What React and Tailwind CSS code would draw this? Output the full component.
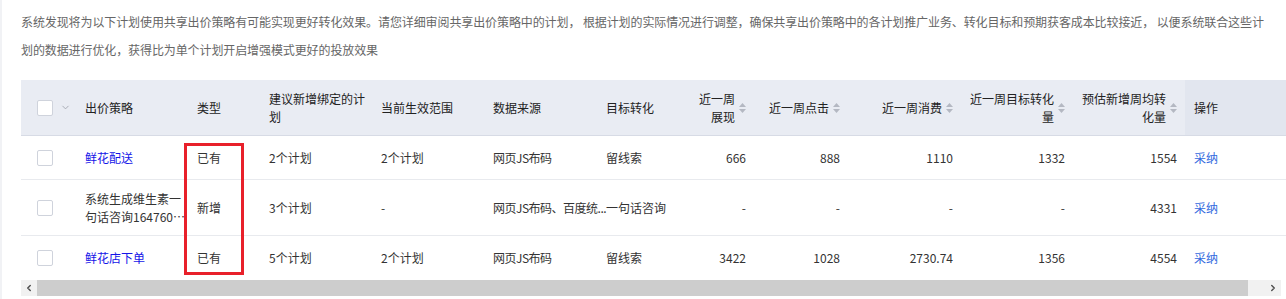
import React from "react";
import { ChevronDown, ChevronLeft, ChevronRight } from "lucide-react";

const rows = [
  {
    id: 1,
    name: "鲜花配送",
    isLink: true,
    type: "已有",
    suggest: "2个计划",
    current: "2个计划",
    source: "网页JS布码",
    target: "留线索",
    show: "666",
    click: "888",
    cost: "1110",
    conv: "1332",
    est: "1554",
    h: "h-11",
  },
  {
    id: 2,
    name: "系统生成维生素一句话咨询1647601234567",
    isLink: false,
    type: "新增",
    suggest: "3个计划",
    current: "-",
    source: "网页JS布码、百度统...",
    target: "一句话咨询",
    show: "-",
    click: "-",
    cost: "-",
    conv: "-",
    est: "4331",
    h: "h-14",
  },
  {
    id: 3,
    name: "鲜花店下单",
    isLink: true,
    type: "已有",
    suggest: "5个计划",
    current: "2个计划",
    source: "网页JS布码",
    target: "留线索",
    show: "3422",
    click: "1028",
    cost: "2730.74",
    conv: "1356",
    est: "4554",
    h: "h-11",
  },
];

const grid =
  "grid grid-cols-[64px_112px_72px_112px_112px_113px_84px_64px_94px_113px_112px_112px_101px]";

function SortIcon() {
  return (
    <svg width="7" height="12" viewBox="0 0 7 12" className="shrink-0">
      <path d="M0 5 L3.5 1 L7 5 Z" fill="#b4b8c2" />
      <path d="M0 7 L3.5 11 L7 7 Z" fill="#b4b8c2" />
    </svg>
  );
}

function Checkbox() {
  return (
    <span className="block w-4 h-4 rounded-[2px] border border-[#cfd3dc] bg-white" />
  );
}

function SortHead({ children }) {
  return (
    <div className="flex items-center justify-end gap-1 pr-2">
      <span className="text-right">{children}</span>
      <SortIcon />
    </div>
  );
}

export default function App() {
  return (
    <div className="relative h-[299px] w-[1286px] overflow-hidden bg-white border-l-2 border-[#f1f2f5] font-['Noto_Sans_CJK_SC','Liberation_Sans',sans-serif] text-[12px]">
      <div className="pl-[19px] pt-2">
        <p className="whitespace-nowrap leading-[28px] text-[#666] tracking-[-0.1px]">
          系统发现将为以下计划使用共享出价策略有可能实现更好转化效果。请您详细审阅共享出价策略中的计划，
          根据计划的实际情况进行调整，确保共享出价策略中的各计划推广业务、转化目标和预期获客成本比较接近，
          以便系统联合这些计
          <br />
          划的数据进行优化，获得比为单个计划开启增强模式更好的投放效果
        </p>

        <div className="mt-4 leading-[18px]">
          {/* header */}
          <div className={`${grid} h-14 bg-[#e9ecf3] border-b border-[#d7dbe5] text-[#222]`}>
            <div className="flex items-center pl-4">
              <Checkbox />
              <ChevronDown size={11} strokeWidth={1.75} className="ml-[7px] text-[#9a9ea8]" />
            </div>
            <div className="flex items-center pr-2">出价策略</div>
            <div className="flex items-center pr-2">类型</div>
            <div className="flex items-center pr-2">建议新增绑定的计划</div>
            <div className="flex items-center pr-2">当前生效范围</div>
            <div className="flex items-center pr-2">数据来源</div>
            <div className="flex items-center pr-2">目标转化</div>
            <div className="flex items-center justify-end">
              <SortHead>近一周展现</SortHead>
            </div>
            <div className="flex items-center justify-end">
              <SortHead>近一周点击</SortHead>
            </div>
            <div className="flex items-center justify-end">
              <SortHead>近一周消费</SortHead>
            </div>
            <div className="flex items-center justify-end pl-1.5">
              <SortHead>近一周目标转化量</SortHead>
            </div>
            <div className="flex items-center justify-end pl-1.5">
              <SortHead>预估新增周均转化量</SortHead>
            </div>
            <div className="flex items-center pl-[9px] bg-[#e2e6ef]">操作</div>
          </div>

          {/* body */}
          {rows.map((row, i) => (
            <div
              key={row.id}
              className={`${grid} ${row.h} items-center text-[#333] ${
                i < rows.length - 1 ? "border-b border-[#e8eaee]" : ""
              }`}
            >
              <div className="pl-4">
                <Checkbox />
              </div>
              <div className="pr-2">
                {row.isLink ? (
                  <span className="text-[#1515e8]">{row.name}</span>
                ) : (
                  <span className="line-clamp-2 break-all">{row.name}</span>
                )}
              </div>
              <div className="pr-2">{row.type}</div>
              <div className="pr-2">{row.suggest}</div>
              <div className="pr-2">{row.current}</div>
              <div className="whitespace-nowrap tracking-[-0.5px]">{row.source}</div>
              <div className="pr-2">{row.target}</div>
              <div className="pr-2 text-right">{row.show}</div>
              <div className="pr-2 text-right">{row.click}</div>
              <div className="pr-2 text-right">{row.cost}</div>
              <div className="pr-2 text-right">{row.conv}</div>
              <div className="pr-2 text-right">{row.est}</div>
              <div className="pl-[9px] text-[#2f68de]">采纳</div>
            </div>
          ))}

          {/* horizontal scrollbar */}
          <div className="flex h-4">
            <div className="flex w-4 items-center justify-center bg-[#f1f1f1]">
              <ChevronLeft size={10} strokeWidth={3.5} className="text-[#505050]" />
            </div>
            <div className="flex-1 bg-[#cdcdcd]" />
            <div className="w-[17px] bg-[#f1f1f1]" />
            <div className="flex w-4 items-center justify-center bg-[#f1f1f1]">
              <ChevronRight size={10} strokeWidth={3.5} className="text-[#505050]" />
            </div>
            <div className="w-[5px] bg-white" />
          </div>
        </div>
      </div>

      {/* annotation box */}
      <div className="absolute left-[182px] top-[143px] h-[132px] w-[60px] border-[3px] border-[#e8202a]" />
    </div>
  );
}
